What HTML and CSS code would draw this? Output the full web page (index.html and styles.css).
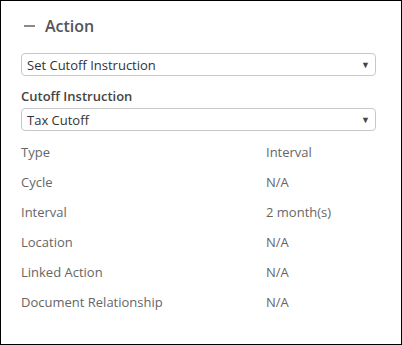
FILE: index.html
```html
<!DOCTYPE html>
<html lang="en">
<head>
    <meta charset="UTF-8">
    <meta name="viewport" content="width=device-width, initial-scale=1.0">
    <title>Action</title>
    <link rel="stylesheet" href="styles.css">
</head>
<body>
    <div class="panel">
        <div class="panel-head">
            <span class="toggle"></span>
            <h2>Action</h2>
        </div>

        <div class="select">
            <span>Set Cutoff Instruction</span>
            <span class="caret">&#9660;</span>
        </div>

        <label class="field-label">Cutoff Instruction</label>
        <div class="select">
            <span>Tax Cutoff</span>
            <span class="caret">&#9660;</span>
        </div>

        <dl class="details">
            <dt>Type</dt><dd>Interval</dd>
            <dt>Cycle</dt><dd>N/A</dd>
            <dt>Interval</dt><dd>2 month(s)</dd>
            <dt>Location</dt><dd>N/A</dd>
            <dt>Linked Action</dt><dd>N/A</dd>
            <dt>Document Relationship</dt><dd>N/A</dd>
        </dl>
    </div>
</body>
</html>
```

FILE: styles.css
```css
* {
    box-sizing: border-box;
}
body {
    margin: 0;
    font-family: 'Open Sans', 'Liberation Sans', sans-serif;
    font-size: 13px;
    color: #555;
    background-color: #fff;
}
.panel {
    width: 402px;
    height: 345px;
    border: 1px solid #000;
    padding: 14px 25px 0 20px;
}
.panel-head {
    display: flex;
    align-items: center;
    height: 22px;
    margin-bottom: 16px;
}
.toggle {
    width: 11px;
    height: 2px;
    background-color: #8a8a8a;
    margin: 0 10px 0 3px;
}
h2 {
    margin: 0;
    font-size: 16px;
    font-weight: 600;
    color: #555;
}
.select {
    display: flex;
    justify-content: space-between;
    align-items: center;
    height: 23px;
    border: 1px solid #c8c8c8;
    border-radius: 4px;
    padding: 0 5px 0 5px;
    color: #333;
}
.caret {
    font-size: 9px;
    color: #444;
}
.field-label {
    display: block;
    margin: 11px 0 3px;
    font-weight: 600;
    color: #444;
}
.details {
    display: grid;
    grid-template-columns: 245px 1fr;
    row-gap: 12px;
    margin: 12px 0 0;
    line-height: 18px;
    color: #666;
}
.details dt, .details dd {
    margin: 0;
}
```
